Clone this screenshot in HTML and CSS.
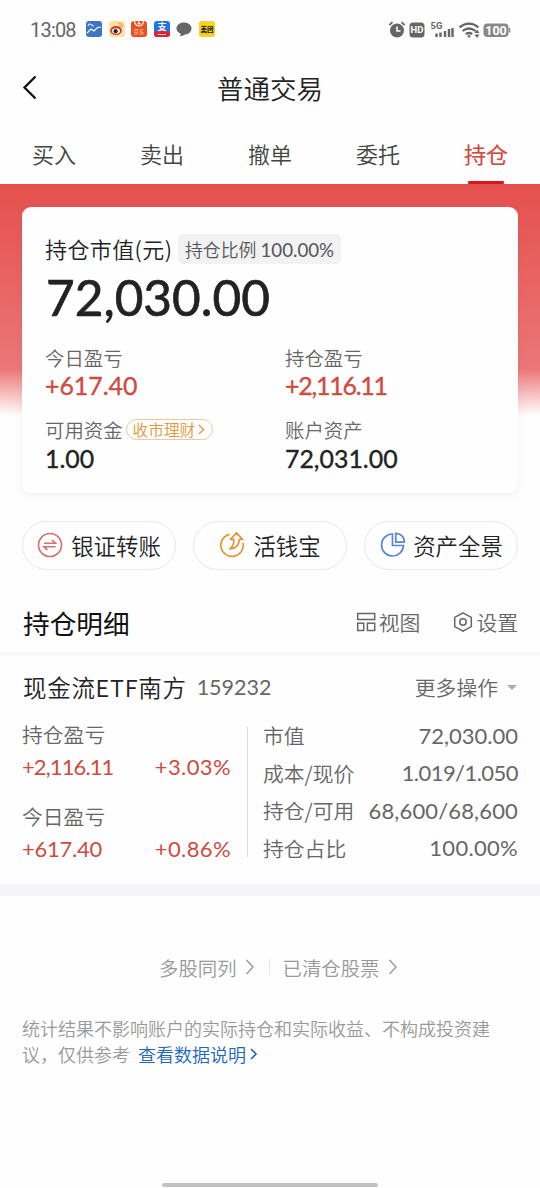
FILE: index.html
```html
<!DOCTYPE html>
<html lang="zh-CN">
<head>
<meta charset="utf-8">
<title>普通交易</title>
<link rel="stylesheet" href="styles.css">
</head>
<body>
<div class="screen">
  <header class="status">
    <span class="clock">13:08</span>
    <div class="apps">
      <svg width="16" height="16" viewBox="0 0 16 16"><rect width="16" height="16" rx="3" fill="#3f73c4"/><path d="M1 12l4-4 3 2 3.500-3.500L15 6" fill="none" stroke="#fff" stroke-width="1.2"/><path d="M2 5q1-3 3-1.500T8 5" fill="none" stroke="#cfe0fa" stroke-width="1.2"/></svg>
      <svg width="16" height="16" viewBox="0 0 16 16"><rect width="16" height="16" rx="3" fill="#fde2a0"/><ellipse cx="7" cy="9.500" rx="5.800" ry="4.500" fill="#d8342b"/><ellipse cx="7" cy="10" rx="4" ry="2.800" fill="#fff"/><circle cx="6.600" cy="10.200" r="2.100" fill="#222"/><path d="M9.500 2.600q4-.6 4 3.600M10 4.800q1.800 0 1.600 1.800" fill="none" stroke="#f0962d" stroke-width="1.100"/></svg>
      <svg width="16" height="16" viewBox="0 0 16 16"><rect width="16" height="16" rx="3" fill="#e8501f"/><path d="M3.500 0a4.500 5 0 0 0 9 0" fill="none" stroke="#fff" stroke-width="1.200"/><path d="M6.500 2.500h3M8 0v4" stroke="#fff"/><text x="8" y="13" class="logo" fill="#fff">京东</text></svg>
      <svg width="16" height="16" viewBox="0 0 16 16"><rect width="16" height="16" rx="3" fill="#2276e3"/><path d="M0 11q8-2.500 16 0v2a3 3 0 0 1-3 3H3a3 3 0 0 1-3-3z" fill="#e1252d"/><text x="8" y="9.200" class="logo big" fill="#fff">支</text><path d="M4 13.500h8" stroke="#fff" stroke-dasharray="1.500 .6"/></svg>
      <svg width="16" height="16" viewBox="0 0 16 16"><path d="M8 1.500c4.300 0 7.500 2.600 7.500 6s-3.200 6-6.500 6q-2.500 1.700-5 1.800l.8-2.600C2 11.700.5 9.800.5 7.500c0-3.400 3.200-6 7.500-6z" fill="#666"/></svg>
      <svg width="16" height="16" viewBox="0 0 16 16"><rect width="16" height="16" rx="2.500" fill="#fad31c"/><text x="8" y="10.500" class="logo bold" fill="#222">美团</text></svg>
    </div>
    <svg class="system" width="124" height="20" viewBox="0 0 124 20">
      <circle cx="9" cy="10.500" r="7" fill="#666"/><path d="M1.300 5.200l3.200-3M16.700 5.200l-3.200-3" stroke="#666" stroke-width="1.800"/><path d="M9 6.500v4.500h3.500" fill="none" stroke="#fff" stroke-width="1.600"/>
      <rect x="21.500" y="2.500" width="15" height="15" rx="3.500" fill="#666"/><text x="29" y="13.300" class="sys" font-size="9.500" fill="#fff">HD</text>
      <text x="48.500" y="9" class="sys" font-size="9.500" fill="#666">5G</text>
      <path d="M48.500 17v-3.500M52.500 17v-4.500M57 17v-6M61 17V9M64.500 17V8" stroke="#666" stroke-width="2.400"/>
      <path d="M71.500 7.300q9.500-7.500 19 0M74.500 11q6.500-5 13 0M77.800 14.200q3.200-2.400 6.400 0" fill="none" stroke="#666" stroke-width="2.200"/><circle cx="81" cy="16.200" r="1.300" fill="#666"/><path d="M86.500 13l2.500-3.500 2.500 3.500zM86.500 14.500l2.500 3.500 2.500-3.500z" fill="#666"/>
      <rect x="95.500" y="3.500" width="25" height="13.500" rx="4" fill="#888"/><path d="M121.500 8v4.500" stroke="#888" stroke-width="1.500"/><text x="108" y="14.700" class="sys" font-size="12.500" fill="#fff">100</text>
    </svg>
  </header>

  <div class="titlebar">
    <svg class="back" width="16" height="26" viewBox="0 0 16 26"><path d="M13.500 1.500L2.500 12.500l11 11" fill="none" stroke="#111" stroke-width="2.300"/></svg>
    <h1>普通交易</h1>
  </div>

  <nav class="tabs">
    <a>买入</a><a>卖出</a><a>撤单</a><a>委托</a><a class="active">持仓</a>
  </nav>

  <section class="hero">
    <div class="card">
      <div class="card-head"><span class="card-title">持仓市值(元)</span><span class="ratio">持仓比例 <b>100.00%</b></span></div>
      <div class="total">72,030.00</div>
      <div class="stats">
        <div class="stat"><div class="label">今日盈亏</div><div class="value red">+617.40</div></div>
        <div class="stat"><div class="label">持仓盈亏</div><div class="value red ones">+2,116.11</div></div>
        <div class="stat"><div class="label">可用资金<span class="promo">收市理财<svg width="7" height="11" viewBox="0 0 7 11"><path d="M1 1l4.500 4.500L1 10" fill="none" stroke="#e09a37" stroke-width="1.400"/></svg></span></div><div class="value">1.00</div></div>
        <div class="stat"><div class="label">账户资产</div><div class="value">72,031.00</div></div>
      </div>
    </div>
  </section>

  <div class="actions">
    <button class="chip"><svg width="26" height="26" viewBox="0 0 26 26" fill="none" stroke="#d66f6f" stroke-width="1.600"><circle cx="13" cy="13" r="11.500"/><path d="M7 11.300h11.500l-3.500-3.300M18.500 14.700H7l3.500 3.300"/></svg>银证转账</button>
    <button class="chip"><svg width="26" height="26" viewBox="0 0 26 26" fill="none" stroke="#df9838" stroke-width="1.700"><path d="M10.500 2.300A11.200 11.200 0 1 0 24 11"/><path d="M17.500 0.900l-6 6.500h3.300c.2 4.300-1 7.300-4 9.600 5.500-.3 9.200-3.500 9.500-9.600h3.300z" stroke-linejoin="round"/></svg>活钱宝</button>
    <button class="chip"><svg width="26" height="26" viewBox="0 0 26 26" fill="none" stroke="#5687d4" stroke-width="1.700"><path d="M13.500 2A11 11 0 1 0 24.500 13.500h-11z"/><path d="M16.800 1.300v8.800h8.700A8.800 8.800 0 0 0 16.800 1.300z"/></svg>资产全景</button>
  </div>

  <div class="section-head">
    <h2>持仓明细</h2>
    <span class="tool"><svg width="20" height="20" viewBox="0 0 20 20" fill="none" stroke="#666" stroke-width="1.500"><rect x="1.700" y="1.500" width="17" height="6"/><rect x="1.700" y="11.200" width="6" height="7.300"/><rect x="11.400" y="11.200" width="7.300" height="7.300"/></svg>视图</span>
    <span class="tool second"><svg width="20" height="20" viewBox="0 0 20 20" fill="none" stroke="#666" stroke-width="1.500"><path d="M10 .9l8.300 4.500v9.200L10 19.100l-8.300-4.500V5.400z"/><circle cx="10" cy="10" r="3.200"/></svg>设置</span>
  </div>

  <section class="holding">
    <div class="holding-head"><span class="name">现金流ETF南方</span><span class="code">159232</span><span class="more">更多操作</span><i class="caret"></i></div>
    <div class="holding-body">
      <div class="profit">
        <div class="p-label">持仓盈亏</div>
        <div class="p-row"><span class="ones">+2,116.11</span><span class="rate">+3.03%</span></div>
        <div class="p-label later">今日盈亏</div>
        <div class="p-row"><span class="day">+617.40</span><span class="rate">+0.86%</span></div>
      </div>
      <dl class="facts">
        <div><dt>市值</dt><dd>72,030.00</dd></div>
        <div><dt>成本/现价</dt><dd class="price">1.019/1.050</dd></div>
        <div><dt>持仓/可用</dt><dd class="amount">68,600/68,600</dd></div>
        <div><dt>持仓占比</dt><dd class="share">100.00%</dd></div>
      </dl>
    </div>
  </section>
  <div class="band"></div>

  <div class="links">
    <span>多股同列</span><svg width="10" height="16" viewBox="0 0 10 16"><path d="M1.500 1L8 8l-6.500 7" fill="none" stroke="#999" stroke-width="1.400"/></svg>
    <i></i>
    <span>已清仓股票</span><svg width="10" height="16" viewBox="0 0 10 16"><path d="M1.500 1L8 8l-6.500 7" fill="none" stroke="#999" stroke-width="1.400"/></svg>
  </div>
  <p class="note">统计结果不影响账户的实际持仓和实际收益、不构成投资建<br>议，仅供参考<a>查看数据说明<svg width="8" height="12" viewBox="0 0 8 12"><path d="M1 1l5 5-5 5" fill="none" stroke="#2166bd" stroke-width="1.600"/></svg></a></p>
  <div class="home"></div>
</div>
</body>
</html>
```
FILE: styles.css
```css
* { box-sizing: border-box; }
body {
  margin: 0;
  background: #fefefe;
  color: #222;
  font-family: "Noto Sans CJK SC", sans-serif;
  font-weight: 350;
}
svg { display: block; flex: none; }
.screen { width: 540px; height: 1188px; display: flex; flex-direction: column; overflow: hidden; }

.status { height: 60px; padding: 0 28px 0 30px; display: flex; align-items: center; }
.clock { width: 56px; font: 20px/58px Roboto, sans-serif; color: #666; letter-spacing: -.8px; }
.apps { display: flex; gap: 6.500px; margin-top: -2px; }
.system { margin: -1px 0 0 auto; }
.logo { font-family: "Noto Sans CJK SC", sans-serif; font-size: 5.500px; text-anchor: middle; }
.big { font-size: 9px; font-weight: 700; }
.bold { font-size: 6.500px; font-weight: 900; }
.sys { font-family: Roboto, sans-serif; font-weight: 700; text-anchor: middle; }

.titlebar { height: 56px; padding: 0 22px; display: grid; grid-template-columns: 16px 1fr 16px; align-items: center; }
h1 { margin: 0; font-size: 26.500px; line-height: 56px; font-weight: 350; text-align: center; }

.tabs { height: 68px; display: grid; grid-template-columns: repeat(5, 108px); }
.tabs a { display: flex; flex-direction: column; align-items: center; font-size: 22px; line-height: 75px; height: 68px; color: #444; }
.tabs .active { color: #cf4b40; font-weight: 400; -webkit-text-stroke: .2px; }
.active::after { content: ""; width: 36px; height: 3px; margin-top: -10px; border-radius: 1px; background: #d9171b; }

.hero {
  height: 309px;
  padding: 23px 22px 0;
  background: linear-gradient(#e5504e 0, #eb7777 185px, #f5b6b6 207px, #fefefe 232px);
}
.card { height: 286px; padding: 27px 23px 0; border-radius: 9px; background: #fefefe; box-shadow: 0 3px 10px rgba(0, 0, 0, .05); }
.card-head { height: 30px; display: flex; align-items: center; }
.card-title { width: 133px; font-size: 22px; letter-spacing: .4px; line-height: 30px; padding-bottom: 2px; white-space: nowrap; }
.ratio { width: 163px; height: 30px; border-radius: 5px; background: #f2f2f4; color: #555; text-align: center; font-size: 17.900px; line-height: 30px; white-space: nowrap; }
.ratio b { font: 18.700px Lato, sans-serif; }
.total { height: 79px; padding-left: 1px; font: 400 49.500px/67px Lato, sans-serif; -webkit-text-stroke: .7px; }
.stats { display: grid; grid-template-columns: 240px 1fr; grid-auto-rows: 72.500px; }
.label { display: flex; align-items: center; height: 28px; color: #666; font-size: 19.400px; white-space: nowrap; }
.value { font: 400 24.900px/29px Lato, sans-serif; -webkit-text-stroke: .35px; }
.red { color: #cf4b40; }
.value.ones { letter-spacing: -1.200px; }
.promo { display: flex; align-items: center; gap: 3px; width: 87px; height: 21px; margin-left: 3px; padding-left: 6px; border: 1px solid #edc8a6; border-radius: 11px; color: #e09a37; font-size: 15.700px; line-height: 18px; }

.actions { height: 77px; padding: 28px 22px 0; display: grid; grid-template-columns: repeat(3, 154px); gap: 17px; }
.chip { height: 49px; padding: 0 0 1px; display: flex; align-items: center; justify-content: center; gap: 8px; border: 1px solid #e8e8e8; border-radius: 25px; background: #fefefe; color: #222; font: 350 22.400px "Noto Sans CJK SC", sans-serif; white-space: nowrap; }

.section-head { height: 86px; padding: 22px 22px 0 23px; display: flex; align-items: center; border-bottom: 4px solid #f9f9fa; }
h2 { margin: 0 auto 0 0; font-size: 26.700px; font-weight: 400; color: #111; }
.tool { display: flex; align-items: center; gap: 3px; font-size: 20.800px; color: #666; }
.second { margin-left: 33px; }

.holding { height: 228px; padding: 11px 22px 0; color: #666; }
.holding-head { height: 40px; display: flex; align-items: center; white-space: nowrap; }
.name { margin-left: 1px; font-size: 23.500px; letter-spacing: .7px; color: #222; }
.code { margin-left: 10px; font: 21.500px Lato, sans-serif; }
.more { margin-left: auto; font-size: 20.800px; }
.caret { margin: 0 1px 0 9px; border: 5px solid transparent; border-top-color: #aaa; border-bottom: 0; }
.holding-body { display: flex; padding-top: 11px; }
.profit { width: 225px; height: 140px; padding-right: 16px; }
.p-label { height: 32px; font-size: 20.800px; line-height: 32px; }
.later { margin-top: 16px; }
.p-row { height: 34px; display: flex; justify-content: space-between; font: 22px/34px Lato, sans-serif; color: #cf4b40; }
.p-row .ones { letter-spacing: -.9px; }
.p-row .day { letter-spacing: -.25px; }
.p-row .rate { letter-spacing: .4px; }
.facts { flex: 1; display: flex; flex-direction: column; margin: 8px 0 0; height: 131px; padding-left: 15px; border-left: 1px solid #ddd; }
.facts div { flex: none; height: 37.500px; display: flex; justify-content: space-between; align-items: center; white-space: nowrap; }
.facts div:first-child { margin-top: -9.500px; }
dt { font-size: 20.800px; }
dd { margin: 0; font: 22px Lato, sans-serif; }
.price { letter-spacing: -.55px; }
.amount { letter-spacing: .15px; }
.share { letter-spacing: .3px; }
.band { height: 12px; background: #f5f5f8; }

.links { height: 102px; padding: 40px 0 0 159px; display: flex; align-items: center; color: #999; font-size: 19.400px; white-space: nowrap; }
.links svg { margin-left: 8px; }
.links i { width: 1px; height: 16px; margin: 0 13px 0 14px; background: #e4e4e4; }
.note { margin: 17px 0 0 22px; color: #999; font-size: 18px; line-height: 26px; white-space: nowrap; }
.note a { display: inline-flex; align-items: center; gap: 4px; margin-left: 8px; color: #2166bd; }
.home { width: 216px; height: 4px; margin: auto auto 1px; border-radius: 2px; background: #c1c1c1; }
```
